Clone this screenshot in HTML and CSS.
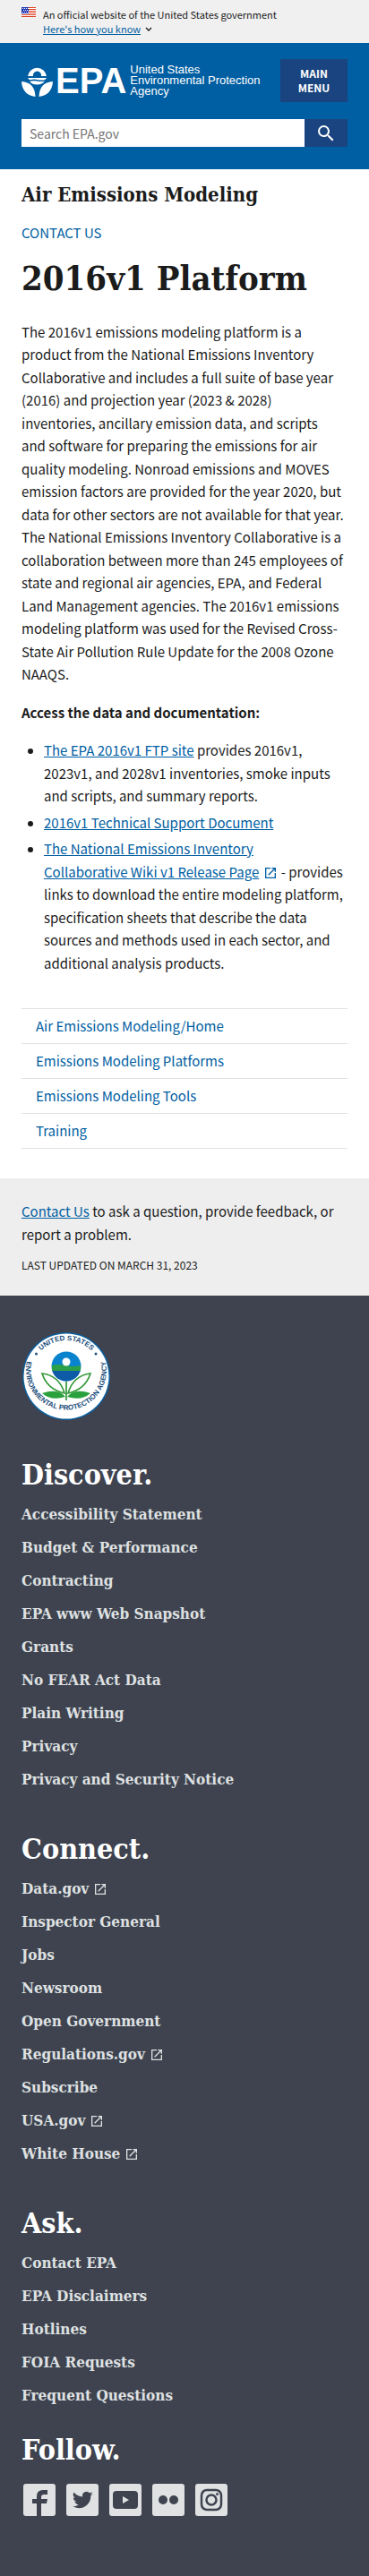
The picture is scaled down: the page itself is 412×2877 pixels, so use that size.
FILE: index.html
```html
<!DOCTYPE html>
<html lang="en">
<head>
<meta charset="utf-8">
<meta name="viewport" content="width=device-width, initial-scale=1">
<title>2016v1 Platform | US EPA</title>
<link rel="stylesheet" href="styles.css">
</head>
<body>
<svg class="sprite" width="0" height="0" aria-hidden="true">
  <symbol id="external" viewBox="0 0 24 24"><path fill="currentColor" d="M19 19H5V5h7V3H3v18h18v-9h-2v7zM14 3v2h3.600l-9.800 9.800 1.400 1.400L19 6.400V10h2V3h-7z"/></symbol>
</svg>

<section class="banner" aria-label="Official government website">
  <svg class="banner-flag" viewBox="0 0 16 11" aria-hidden="true">
    <path fill="#fff" d="M0 0h16v11H0z"/>
    <path stroke="#db3e1f" d="M0 .5h16M0 2.500h16M0 4.500h16M0 6.500h16M0 8.500h16M0 10.500h16"/>
    <path fill="#1e33b1" d="M0 0h8v7H0z"/>
    <path stroke="#fff" stroke-dasharray="1 1" d="M1 1.500h7M2 3.500h6M1 5.500h7"/>
  </svg>
  <div class="banner-text">
    <p>An official website of the United States government</p>
    <button class="banner-toggle" type="button"><span>Here's how you know</span><svg viewBox="0 0 8 5" aria-hidden="true"><path d="M1 1l3 3 3-3" fill="none" stroke="currentColor" stroke-width="1.300"/></svg></button>
  </div>
</section>

<header class="header">
  <div class="header-top">
    <a class="logo" href="#">
      <svg class="logo-flower" viewBox="0 0 35 35" aria-hidden="true">
        <path fill="#fff" d="M7 12a10.600 10.600 0 0 1 21 0h-6a4.600 4.600 0 1 0-9 0zM7 14h21q-1 2.300-3.500 2.500-3 .4-7-.5-4-.9-7 .2Q8 16.300 7 14zM9 18q4-1.500 8.500-.4 4.500 1 8.500 0-3 4-8.500 4T9 18zM0 18q15 1 15.500 17Q1 33 0 18zM35 18q-15 1-15.500 17Q34 33 35 18z"/>
      </svg>
      <span class="logo-epa">EPA</span>
      <span class="logo-name">United States<br>Environmental Protection<br>Agency</span>
    </a>
    <button class="menu-button" type="button">Main Menu</button>
  </div>
  <form class="search" role="search">
    <input type="search" aria-label="Search EPA.gov" placeholder="Search EPA.gov">
    <button type="submit" aria-label="Search"><svg viewBox="0 0 24 24" aria-hidden="true"><path fill="#fff" d="M15.500 14h-.79l-.28-.27A6.470 6.470 0 0 0 16 9.500 6.500 6.500 0 1 0 9.500 16c1.610 0 3.090-.59 4.230-1.570l.27.28v.79l5 4.990L20.490 19l-4.990-5zm-6 0C7.010 14 5 11.990 5 9.500S7.010 5 9.500 5 14 7.010 14 9.500 11.990 14 9.500 14z"/></svg></button>
  </form>
</header>

<main class="main">
  <h2 class="area-title">Air Emissions Modeling</h2>
  <a class="area-contact" href="#">Contact Us</a>
  <h1>2016v1 Platform</h1>
  <p>The 2016v1 emissions modeling platform is a product from the National Emissions Inventory Collaborative and includes a full suite of base year (2016) and projection year (2023 &amp; 2028) inventories, ancillary emission data, and scripts<br> and software for preparing the emissions for air<br> quality modeling. Nonroad emissions and MOVES<br> emission factors are provided for the year 2020, but<br> data for other sectors are not available for that year.<br> The National Emissions Inventory Collaborative is a<br> collaboration between more than 245 employees of<br> state and regional air agencies, EPA, and Federal Land Management agencies. The 2016v1 emissions modeling platform was used for the Revised Cross-State Air Pollution Rule Update for the 2008 Ozone NAAQS.</p>
  <p><strong>Access the data and documentation:</strong></p>
  <ul class="docs">
    <li><a href="#">The EPA 2016v1 FTP site</a> provides 2016v1, 2023v1, and 2028v1 inventories, smoke inputs and scripts, and summary reports.</li>
    <li><a href="#">2016v1 Technical Support Document</a></li>
    <li><a href="#">The National Emissions Inventory<br> Collaborative Wiki v1 Release Page<svg class="external" aria-hidden="true"><use href="#external"/></svg></a> - provides<br> links to download the entire modeling platform, specification sheets that describe the data sources and methods used in each sector, and additional analysis products.</li>
  </ul>
  <nav aria-label="Side navigation">
    <ul class="sidenav">
      <li><a href="#">Air Emissions Modeling/Home</a></li>
      <li><a href="#">Emissions Modeling Platforms</a></li>
      <li><a href="#">Emissions Modeling Tools</a></li>
      <li><a href="#">Training</a></li>
    </ul>
  </nav>
</main>

<section class="contact">
  <p><a href="#">Contact Us</a> to ask a question, provide feedback, or report a problem.</p>
  <p class="updated">Last updated on March 31, 2023</p>
</section>

<footer class="footer">
  <svg class="seal" viewBox="0 0 100 100" role="img" aria-label="United States Environmental Protection Agency seal">
    <defs>
      <path id="arc-top" d="M10 50a40 40 0 0 1 80 0"/>
      <path id="arc-bottom" d="M7.500 28a45 45 0 1 0 85 0"/>
    </defs>
    <circle cx="50" cy="50" r="49" fill="#0b5f9e"/>
    <circle cx="50" cy="50" r="47.500" fill="#fff"/>
    <g class="seal-text">
      <text><textPath href="#arc-top" startOffset="50%">UNITED STATES</textPath></text>
      <text><textPath href="#arc-bottom" startOffset="50%">ENVIRONMENTAL PROTECTION AGENCY</textPath></text>
    </g>
    <circle cx="16.500" cy="25" r="1.500" fill="#1c4f7c"/><circle cx="83" cy="25" r="1.500" fill="#1c4f7c"/>
    <circle cx="50" cy="39" r="16.500" fill="#0a83cf"/>
    <path fill="#2aa148" d="M34 38q8-2 16 0t16 0v6H34z"/>
    <path fill="#0d5aa7" d="M34.300 44h31.400a16.500 16.500 0 0 1-31.400 0z"/>
    <circle cx="50" cy="34" r="4.500" fill="#fff"/>
    <path fill="none" stroke="#35993a" stroke-width="1.700" d="M50 56v21M48 69Q29 65 23 47q19 2 25 22zM52 69q19-4 25-22-19 2-25 22z"/>
    <path fill="#2aa13c" d="M49 73q-8-10-26-4 10 9 26 4zM51 73q8-10 26-4-10 9-26 4z"/>
  </svg>

  <nav class="footer-group" aria-labelledby="discover">
    <h2 id="discover">Discover.</h2>
    <ul>
      <li><a href="#">Accessibility Statement</a></li>
      <li><a href="#">Budget &amp; Performance</a></li>
      <li><a href="#">Contracting</a></li>
      <li><a href="#">EPA www Web Snapshot</a></li>
      <li><a href="#">Grants</a></li>
      <li><a href="#">No FEAR Act Data</a></li>
      <li><a href="#">Plain Writing</a></li>
      <li><a href="#">Privacy</a></li>
      <li><a href="#">Privacy and Security Notice</a></li>
    </ul>
  </nav>
  <nav class="footer-group" aria-labelledby="connect">
    <h2 id="connect">Connect.</h2>
    <ul>
      <li><a href="#">Data.gov<svg class="external" aria-hidden="true"><use href="#external"/></svg></a></li>
      <li><a href="#">Inspector General</a></li>
      <li><a href="#">Jobs</a></li>
      <li><a href="#">Newsroom</a></li>
      <li><a href="#">Open Government</a></li>
      <li><a href="#">Regulations.gov<svg class="external" aria-hidden="true"><use href="#external"/></svg></a></li>
      <li><a href="#">Subscribe</a></li>
      <li><a href="#">USA.gov<svg class="external" aria-hidden="true"><use href="#external"/></svg></a></li>
      <li><a href="#">White House<svg class="external" aria-hidden="true"><use href="#external"/></svg></a></li>
    </ul>
  </nav>
  <nav class="footer-group footer-ask" aria-labelledby="ask">
    <h2 id="ask">Ask.</h2>
    <ul>
      <li><a href="#">Contact EPA</a></li>
      <li><a href="#">EPA Disclaimers</a></li>
      <li><a href="#">Hotlines</a></li>
      <li><a href="#">FOIA Requests</a></li>
      <li><a href="#">Frequent Questions</a></li>
    </ul>
  </nav>
  <section aria-labelledby="follow">
    <h2 id="follow">Follow.</h2>
    <div class="social">
      <a href="#" aria-label="Facebook"><svg viewBox="0 0 36 36"><rect width="36" height="36" rx="3"/><path class="ink" d="M15 36V22h-5v-5h5v-3q0-7 7-7h5v5h-4q-3 0-3 3v2h7l-1 5h-6v14z"/></svg></a>
      <a href="#" aria-label="Twitter"><svg viewBox="0 0 36 36"><rect width="36" height="36" rx="3"/><path class="ink" transform="translate(6 6)" d="M23.640 4.940c-.84.370-1.740.620-2.680.730a4.670 4.670 0 0 0 2.050-2.580c-.9.530-1.900.920-2.960 1.130a4.660 4.660 0 0 0-7.940 4.250C8.230 8.270 4.800 6.410 2.500 3.600a4.660 4.660 0 0 0 1.440 6.220c-.77-.020-1.490-.23-2.110-.58v.06a4.660 4.660 0 0 0 3.740 4.570c-.69.180-1.410.210-2.110.080a4.670 4.670 0 0 0 4.360 3.240A9.360 9.360 0 0 1 .9 19.120a13.200 13.200 0 0 0 7.140 2.090c8.570 0 13.260-7.100 13.260-13.260l-.02-.6a9.500 9.500 0 0 0 2.360-2.410z"/></svg></a>
      <a href="#" aria-label="YouTube"><svg viewBox="0 0 36 36"><rect width="36" height="36" rx="3"/><rect class="ink" x="4" y="8" width="28" height="20" rx="4"/><path d="M15 14l7 4-7 4z"/></svg></a>
      <a href="#" aria-label="Flickr"><svg viewBox="0 0 36 36"><rect width="36" height="36" rx="3"/><circle class="ink" cx="12" cy="18" r="5"/><circle class="ink" cx="24" cy="18" r="5"/></svg></a>
      <a href="#" aria-label="Instagram"><svg viewBox="0 0 36 36"><rect width="36" height="36" rx="3"/><g class="ink-line"><rect x="7" y="7" width="22" height="22" rx="6"/><circle cx="18" cy="18" r="5.500"/></g><circle class="ink" cx="24.500" cy="11.500" r="1.500"/></svg></a>
    </div>
  </section>
</footer>
</body>
</html>
```

FILE: styles.css
```css
* { box-sizing: border-box; }

:root {
  --sans: "Noto Sans CJK SC", "Open Sans", sans-serif;
  --serif: "DejaVu Serif Condensed", "DejaVu Serif", serif;
  --ink: #1b1b1b;
  --blue: #005ea2;
  --navy: #1a4480;
  --gray: #eeeeee;
  --slate: #3e434f;
  --gutter: 24px;
}

body {
  margin: 0;
  color: var(--ink);
  background: #fff;
  font-family: var(--sans);
  font-size: 15px;
  line-height: 1.7;
}

h1, h2, p, ul { margin: 0; }
ul { padding: 0; list-style: none; }
h1, h2 { font-family: var(--serif); font-weight: bold; }
a { color: var(--blue); }
button { border: 0; cursor: pointer; font-family: inherit; }
svg { display: block; }
.sprite { position: absolute; }

.external {
  display: inline-block;
  width: 16px;
  height: 16px;
  margin-left: 5px;
  vertical-align: -3px;
}

.banner {
  display: flex;
  gap: 8px;
  padding: 8px var(--gutter);
  background: #f0f0f0;
  font-size: 11px;
  line-height: 16px;
}
.banner-flag { flex: none; width: 16px; height: 11px; }
.banner-toggle {
  display: flex;
  align-items: center;
  gap: 5px;
  padding: 0;
  background: none;
  color: var(--blue);
  font-size: 11px;
  line-height: 16px;
}
.banner-toggle span { text-decoration: underline; }
.banner-toggle svg { width: 8px; height: 5px; color: var(--ink); }

.header { padding: 18px var(--gutter) 25px; background: var(--blue); }
.header-top { display: flex; align-items: center; justify-content: space-between; }
.logo { display: flex; align-items: center; color: #fff; text-decoration: none; }
.logo-flower { width: 35px; height: 35px; }
.logo-epa {
  margin-left: 3px;
  font: bold 40px/36px "Liberation Sans", sans-serif;
}
.logo-name {
  margin-left: 4px;
  font: 13px/12px "Liberation Sans", sans-serif;
  white-space: nowrap;
}
.menu-button {
  width: 75px;
  padding: 8px 16px;
  background: var(--navy);
  color: #fff;
  font-size: 12px;
  font-weight: bold;
  line-height: 16px;
  text-transform: uppercase;
}
.search { display: flex; margin-top: 19px; }
.search input {
  flex: 1;
  min-width: 0;
  height: 31px;
  padding: 0 8px;
  border: 1px solid #fff;
  border-radius: 0;
  background: #fff;
  color: var(--ink);
  font: 14px/20px var(--sans);
}
.search input::placeholder { color: #757575; }
.search button { display: grid; place-items: center; width: 48px; padding: 0; background: var(--navy); }
.search svg { width: 24px; height: 24px; }

.main { padding: 16px var(--gutter) 33px; }
.area-title { font-size: 22px; line-height: 24px; }
.area-contact {
  display: block;
  margin-top: 18px;
  text-decoration: none;
  text-transform: uppercase;
}
.main h1 { margin: 16px 0 25px; font-size: 38px; line-height: 44px; }
.main p { margin-bottom: 17px; }
.docs { padding-left: 25px; list-style: disc; }
.docs li + li { margin-top: 4px; }
.sidenav { margin-top: 38px; border-top: 1px solid #dfe1e2; }
.sidenav li { border-bottom: 1px solid #dfe1e2; }
.sidenav a { display: block; padding: 9px 16px; line-height: 20px; text-decoration: none; }

.contact { padding: 24px var(--gutter); background: var(--gray); }
.contact .updated { margin-top: 12px; font-size: 12px; line-height: 20px; text-transform: uppercase; }

.footer { padding: 40px var(--gutter) 67px; background: var(--slate); color: #fff; }
.seal { width: 100px; height: 100px; margin-bottom: 40px; }
.seal-text {
  fill: #1c4f7c;
  font: bold 8px "Liberation Sans", sans-serif;
  text-anchor: middle;
}
.footer h2 { font-size: 32px; line-height: 40px; }
.footer-group { margin-bottom: 39px; }
.footer-ask { margin-bottom: 22px; }
.footer-group ul { padding-top: 6px; }
.footer-group a {
  display: block;
  color: #dfe1e2;
  font: bold 17px/37px var(--serif);
  text-decoration: none;
}
.social { display: flex; gap: 12px; margin: 18px 2px 0; }
.social svg { width: 36px; height: 36px; fill: #dfe1e2; }
.social .ink { fill: var(--slate); }
.social .ink-line { fill: none; stroke: var(--slate); stroke-width: 2.500px; }
```
